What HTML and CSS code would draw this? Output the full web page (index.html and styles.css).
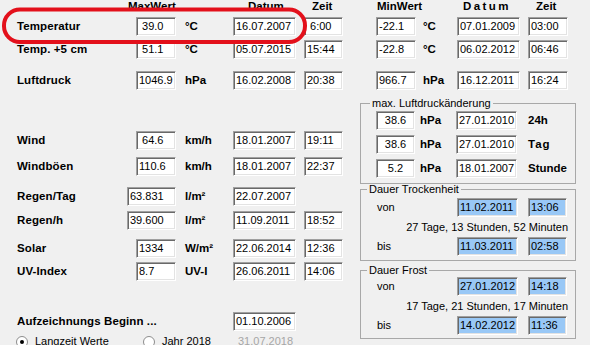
FILE: index.html
```html
<!DOCTYPE html>
<html>
<head>
<meta charset="utf-8">
<link rel="stylesheet" href="styles.css">
</head>
<body>
<div class="page">
  <div class="left">
    <div class="lgrid">
      <div></div><div class="hd hmax">MaxWert</div><div></div><div class="hd hdat">Datum</div><div></div><div class="hd hzeit">Zeit</div>

      <div class="lbl">Temperatur</div><div class="box mx">&nbsp;39.0</div><div class="unit">°C</div><div class="box dt">16.07.2007</div><div></div><div class="box tm">&nbsp;6:00</div>
      <div class="lbl">Temp. +5 cm</div><div class="box mx">&nbsp;51.1</div><div class="unit">°C</div><div class="box dt">05.07.2015</div><div></div><div class="box tm">15:44</div>
      <div class="lbl">Luftdruck</div><div class="box mx">1046.9</div><div class="unit">hPa</div><div class="box dt">16.02.2008</div><div></div><div class="box tm">20:38</div>
      <div class="lbl">Wind</div><div class="box mx">&nbsp;64.6</div><div class="unit">km/h</div><div class="box dt">18.01.2007</div><div></div><div class="box tm">19:11</div>
      <div class="lbl">Windböen</div><div class="box mx">110.6</div><div class="unit">km/h</div><div class="box dt">18.01.2007</div><div></div><div class="box tm">22:37</div>
      <div class="lbl">Regen/Tag</div><div class="box mxw">63.831</div><div class="unit">l/m²</div><div class="box dt">22.07.2007</div><div></div><div></div>
      <div class="lbl">Regen/h</div><div class="box mxw">39.600</div><div class="unit">l/m²</div><div class="box dt">11.09.2011</div><div></div><div class="box tm">18:52</div>
      <div class="lbl">Solar</div><div class="box mx">1334</div><div class="unit">W/m²</div><div class="box dt">22.06.2014</div><div></div><div class="box tm">12:36</div>
      <div class="lbl">UV-Index</div><div class="box mx">8.7</div><div class="unit">UV-I</div><div class="box dt">26.06.2011</div><div></div><div class="box tm">14:06</div>
      <div class="lbl span3">Aufzeichnungs Beginn ...</div><div class="box dt">01.10.2006</div><div></div><div></div>

      <div class="radios">
        <div class="radio r1">
          <svg width="12" height="12" viewBox="0 0 12 12"><circle cx="6" cy="6" r="5.5" fill="#fff" stroke="#8c8c8c"/><circle cx="6" cy="6" r="2" fill="#000"/></svg>
          <span>Langzeit Werte</span>
        </div>
        <div class="radio r2">
          <svg width="12" height="12" viewBox="0 0 12 12"><circle cx="6" cy="6" r="5.5" fill="#fff" stroke="#8c8c8c"/></svg>
          <span>Jahr 2018</span>
        </div>
        <div class="disabled">31.07.2018</div>
      </div>
    </div>
  </div>

  <div class="right">
    <div class="rgrid">
      <div class="hd hmin">MinWert</div><div></div><div class="hd hdat2">Datum</div><div></div><div class="hd hzeit">Zeit</div>
      <div class="box mn">-22.1</div><div class="unit u2">°C</div><div class="box dt">07.01.2009</div><div></div><div class="box tm2">03:00</div>
      <div class="box mn">-22.8</div><div class="unit u2">°C</div><div class="box dt">06.02.2012</div><div></div><div class="box tm2">06:46</div>
      <div class="box mn">966.7</div><div class="unit u2">hPa</div><div class="box dt">16.12.2011</div><div></div><div class="box tm2">16:24</div>
    </div>

    <fieldset class="grp g1">
      <legend>max. Luftdruckänderung</legend>
      <div class="g1grid">
        <div class="box gv">38.6</div><div class="unit u3">hPa</div><div class="box gd">27.01.2010</div><div></div><div class="unit u0">24h</div>
        <div class="box gv">38.6</div><div class="unit u3">hPa</div><div class="box gd">27.01.2010</div><div></div><div class="unit u0 tag">Tag</div>
        <div class="box gv">5.2</div><div class="unit u3">hPa</div><div class="box gd">18.01.2007</div><div></div><div class="unit u0">Stunde</div>
      </div>
    </fieldset>

    <fieldset class="grp g2">
      <legend>Dauer Trockenheit</legend>
      <div class="dgrid">
        <div class="plain">von</div><div class="box gd blue">11.02.2011</div><div></div><div class="box gt blue">13:06</div>
        <div class="dur">27 Tage, 13 Stunden, 52 Minuten</div>
        <div class="plain">bis</div><div class="box gd blue">11.03.2011</div><div></div><div class="box gt blue">02:58</div>
      </div>
    </fieldset>

    <fieldset class="grp g3">
      <legend>Dauer Frost</legend>
      <div class="dgrid">
        <div class="plain">von</div><div class="box gd blue">27.01.2012</div><div></div><div class="box gt blue">14:18</div>
        <div class="dur">17 Tage, 21 Stunden, 17 Minuten</div>
        <div class="plain">bis</div><div class="box gd blue">14.02.2012</div><div></div><div class="box gt blue">11:36</div>
      </div>
    </fieldset>
  </div>

  <svg class="mark" width="312" height="50" viewBox="0 0 312 50">
    <rect x="4" y="9.5" width="301" height="32.5" rx="16" ry="16" fill="none" stroke="#e3101b" stroke-width="4"/>
  </svg>
</div>
</body>
</html>
```

FILE: styles.css
```css
html, body {
  margin: 0;
  padding: 0;
  background: #f0f0f0;
}

body {
  font-family: "Liberation Sans", Arial, sans-serif;
  font-size: 11px;
  color: #000;
}

.page {
  position: relative;
  width: 590px;
  height: 345px;
  overflow: hidden;
  display: flex;
  align-items: flex-start;
}

.left {
  flex: none;
  width: 326px;
  padding-left: 17px;
}

.lgrid {
  display: grid;
  grid-template-columns: 110px 49px 57px 63px 8px 39px;
  grid-template-rows: 17px 23px 31px 60px 26px 30px 24px 28px 23px 50px 23px 13px;
  align-items: start;
}

.hd {
  font-weight: bold;
  font-size: 11.5px;
  line-height: 13px;
  white-space: nowrap;
}

.hmax { padding-left: 1px; }
.hdat { padding-left: 15px; }
.hzeit { padding-left: 8px; }
.hmin { padding-left: 1px; }
.hdat2 { padding-left: 6px; letter-spacing: 2.4px; }

.lbl {
  font-weight: bold;
  font-size: 11.5px;
  letter-spacing: 0.1px;
  line-height: 18px;
  white-space: nowrap;
}

.span3 { grid-column: span 3; }

.unit {
  font-weight: bold;
  font-size: 11.5px;
  line-height: 18px;
  padding-left: 9px;
  white-space: nowrap;
}

.u2 { padding-left: 7px; }
.u3 { padding-left: 5px; }
.u0 { padding-left: 0; }
.tag { letter-spacing: 1px; }

.box {
  box-sizing: border-box;
  height: 19px;
  background: #fff;
  border: 1px solid;
  border-color: #a0a0a0 #ffffff #ffffff #a0a0a0;
  box-shadow: inset 1px 1px 0 #696969, inset -1px -1px 0 #e3e3e3;
  padding-left: 2px;
  line-height: 17px;
  white-space: nowrap;
  overflow: hidden;
}

.mx { width: 40px; justify-self: end; }
.mxw { width: 49px; }
.dt { width: 63px; }
.tm { width: 39px; }
.tm2 { width: 40px; }
.mn { width: 40px; }

.radios {
  grid-column: 1 / -1;
  display: flex;
  align-items: center;
  line-height: 13px;
}

.radio {
  display: flex;
  align-items: center;
  gap: 7px;
}

.r1 { width: 127px; margin-left: -1px; }
.r2 { width: 95px; }

.disabled {
  color: #a6a6a6;
}

.right {
  flex: none;
  width: 216px;
  margin-left: 17px;
}

.rgrid {
  display: grid;
  grid-template-columns: 40px 41px 63px 8px 40px;
  grid-template-rows: 17px 23px 31px 19px;
  padding-left: 16px;
  align-items: start;
}

.grp {
  margin: 0;
  padding: 0;
  min-width: 0;
  border: 1px solid #a8a8a8;
}

.grp legend {
  padding: 0 2px;
  margin-left: 6px;
  line-height: 11px;
  font-size: 11px;
}

.g1 { margin-top: 7px; }
.g1 legend { margin-left: 9px; line-height: 13px; }

.g1grid {
  display: grid;
  grid-template-columns: 39px 41px 61px 11px auto;
  grid-template-rows: 19px 19px 19px;
  row-gap: 5px;
  padding: 1px 0 5px 15px;
  align-items: start;
}

.gv { width: 39px; text-align: center; padding-left: 0; }
.gd { width: 61px; }
.gt { width: 39px; }

.blue { background: #99c8f6; }

.g2 { margin-top: 0; }
.g3 { margin-top: 4px; }

.dgrid {
  display: grid;
  grid-template-columns: 80px 61px 10px 39px;
  grid-template-rows: 19px 20px 19px;
  padding: 3px 0 4px 16px;
  align-items: start;
}

.g3 .dgrid { padding-top: 1px; padding-bottom: 3px; }

.plain {
  line-height: 19px;
}

.dur {
  grid-column: 1 / -1;
  justify-self: end;
  margin-right: -1px;
  line-height: 20px;
  white-space: nowrap;
}

.mark {
  position: absolute;
  left: 0;
  top: 0;
  pointer-events: none;
}
```
